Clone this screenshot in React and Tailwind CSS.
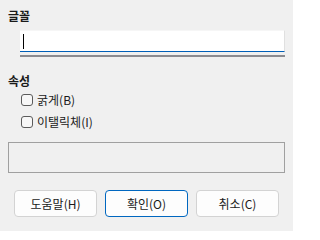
const FONT = { fontFamily: '"Noto Sans CJK KR", "Noto Sans", sans-serif' };

function Checkbox({ label }) {
  return (
    <label className="flex h-[12px] items-center gap-[4px]">
      <span className="block h-[12px] w-[12px] rounded-[3px] border border-[#5b5b5b] bg-[#f7f7f7]" />
      <span className="text-[12px] leading-[12px] text-[#1a1a1a]">{label}</span>
    </label>
  );
}

function Button({ children, primary }) {
  return (
    <button
      type="button"
      className={
        primary
          ? 'h-[27px] w-[83px] rounded-[4px] border border-[#0067c0] bg-[#fdfdfd] text-[12px] text-[#1a1a1a]'
          : 'h-[27px] w-[83px] rounded-[4px] border border-[#d3d3d3] bg-[#fdfdfd] text-[12px] text-[#1a1a1a]'
      }
    >
      {children}
    </button>
  );
}

export default function App() {
  return (
    <div className="h-[231px] w-[293px] bg-[#f0f0f0] px-[8px] pt-[9px]" style={FONT}>
      <p className="text-[12px] font-bold leading-[14px] text-[#1a1a1a]">글꼴</p>

      <div className="ml-[12px] mt-[7px] w-[265px]">
        <div className="flex h-[22px] items-center border-r border-t border-r-[#e0e0e0] border-t-[#f6f6f6] border-b border-b-[#005fb8] bg-white pl-[3px]">
          <span className="block h-[15px] w-px bg-black" />
        </div>
        <div className="mt-[3px] h-[2px] bg-[#8b8b90]" />
      </div>

      <p className="mt-[17px] text-[12px] font-bold leading-[14px] text-[#1a1a1a]">속성</p>

      <div className="ml-[13px] mt-[6px] flex flex-col gap-[10px]">
        <Checkbox label="굵게(B)" />
        <Checkbox label="이탤릭체(I)" />
      </div>

      <div className="mt-[14px] h-[31px] w-[277px] border border-[#a0a0a0]" />

      <div className="ml-[6px] mt-[17px] flex gap-[8px]">
        <Button>도움말(H)</Button>
        <Button primary>확인(O)</Button>
        <Button>취소(C)</Button>
      </div>
    </div>
  );
}
